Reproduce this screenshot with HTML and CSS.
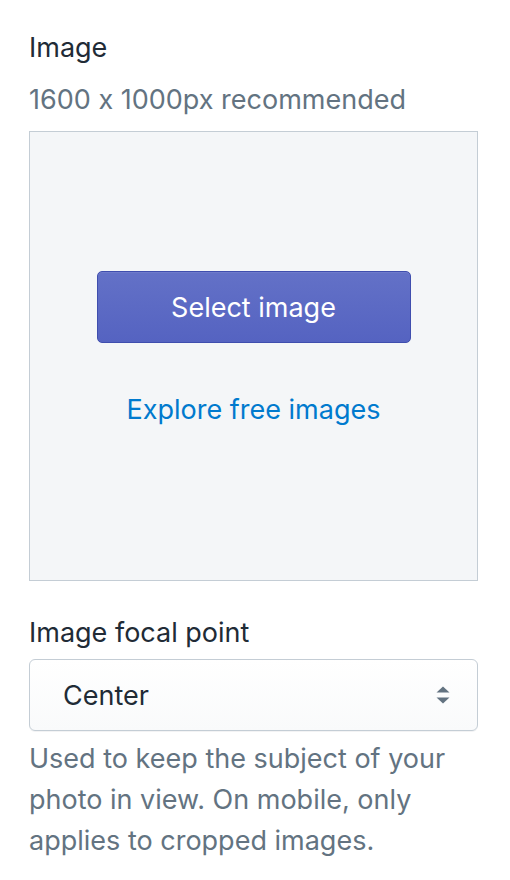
FILE: index.html
```html
<!DOCTYPE html>
<html>
<head>
<meta charset="utf-8">
<link rel="stylesheet" href="styles.css">
</head>
<body>
<div class="panel">
  <div class="field">
    <div class="label">Image</div>
    <div class="sub">1600 x 1000px recommended</div>
    <div class="drop">
      <button class="btn">Select image</button>
      <a class="link">Explore free images</a>
    </div>
  </div>
  <div class="field focal">
    <div class="label">Image focal point</div>
    <div class="select">
      <span class="value">Center</span>
      <svg class="arrows" width="14" height="20" viewBox="0 0 14 20"><path d="M7 1.5 L13.5 7.5 H0.5 Z" fill="#637381"/><path d="M7 18.5 L13.5 12.5 H0.5 Z" fill="#637381"/></svg>
    </div>
    <div class="help">Used to keep the subject of your photo in view. On mobile, only applies to cropped images.</div>
  </div>
</div>
</body>
</html>
```
FILE: styles.css
```css
html, body { margin: 0; padding: 0; background: #fff; }
body { font-family: Inter, "Noto Sans", sans-serif; color: #212b36; font-feature-settings: "calt" 0; }
.panel { padding: 30px 32px 0 29px; width: 449px; }
.label { font-size: 27px; line-height: 36px; color: #212b36; }
.sub { font-size: 27px; line-height: 36px; color: #637381; margin-top: 16px; }
.drop { margin-top: 13px; height: 448px; box-sizing: content-box; border: 1px solid #c4cdd5; background: #f4f6f8; display: flex; flex-direction: column; align-items: center; }
.btn { margin-top: 139px; width: 314px; height: 72px; border: 1px solid #3f4eae; border-radius: 5px; background: linear-gradient(#6371c7, #5563c1); color: #fff; font-family: inherit; font-feature-settings: "calt" 0; font-size: 27px; box-shadow: inset 0 1px 0 0 #6f7bcb; padding: 0; }
.link { margin-top: 49px; font-size: 27px; line-height: 36px; color: #007ace; }
.focal { margin-top: 34px; }
.select { margin-top: 8px; height: 70px; border: 1px solid #c4cdd5; border-radius: 6px; background: linear-gradient(#fff, #f9fafb); display: flex; align-items: center; justify-content: space-between; padding: 0 27px 0 33px; box-shadow: 0 1px 0 0 rgba(22,29,37,0.05); }
.value { font-size: 27px; color: #212b36; }
.help { margin-top: 7px; font-size: 27px; line-height: 41px; color: #637381; }
```
